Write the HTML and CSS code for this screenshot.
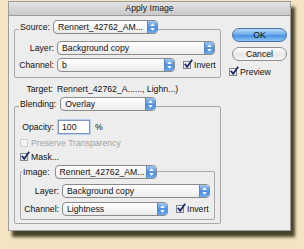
FILE: index.html
```html
<!DOCTYPE html>
<html>
<head>
<meta charset="utf-8">
<link rel="stylesheet" href="styles.css">
</head>
<body>
<div class="dialog">
  <div class="titlebar">Apply Image</div>
  <div class="content">
    <div class="main">
      <div class="group source">
        <div class="head src-head">
          <span class="hlbl">Source:</span>
          <div class="popup w-src"><span class="ptxt">Rennert_42762_AM...</span><span class="stepper"><svg width="9" height="12" viewBox="0 0 9 12"><path d="M2.2 5 L4.5 2.2 L6.8 5 Z M2.2 7 L4.5 9.8 L6.8 7 Z" fill="#fff"/></svg></span></div>
        </div>
        <div class="row r-layer">
          <span class="lbl">Layer:</span>
          <div class="popup w-layer"><span class="ptxt">Background copy</span><span class="stepper"><svg width="9" height="12" viewBox="0 0 9 12"><path d="M2.2 5 L4.5 2.2 L6.8 5 Z M2.2 7 L4.5 9.8 L6.8 7 Z" fill="#fff"/></svg></span></div>
        </div>
        <div class="row r-channel">
          <span class="lbl">Channel:</span>
          <div class="popup w-ch"><span class="ptxt">b</span><span class="stepper"><svg width="9" height="12" viewBox="0 0 9 12"><path d="M2.2 5 L4.5 2.2 L6.8 5 Z M2.2 7 L4.5 9.8 L6.8 7 Z" fill="#fff"/></svg></span></div>
          <span class="cb checked inv1"><svg width="10" height="10" viewBox="0 0 10 10"><path d="M1.8 4.8 L4.2 7.8 L9.2 0.8" fill="none" stroke="#1c2a66" stroke-width="1.8"/></svg></span>
          <span class="cbtxt">Invert</span>
        </div>
      </div>

      <div class="row target">
        <span class="lbl">Target:</span>
        <span class="tval">Rennert_42762_A......, Lighn...)</span>
      </div>

      <div class="group blending">
        <div class="head bl-head">
          <span class="hlbl">Blending:</span>
          <div class="popup w-bl"><span class="ptxt">Overlay</span><span class="stepper"><svg width="9" height="12" viewBox="0 0 9 12"><path d="M2.2 5 L4.5 2.2 L6.8 5 Z M2.2 7 L4.5 9.8 L6.8 7 Z" fill="#fff"/></svg></span></div>
        </div>
        <div class="row r-opacity">
          <span class="lbl">Opacity:</span>
          <span class="input">100</span>
          <span class="pct">%</span>
        </div>
        <div class="crow r-preserve">
          <span class="cb disabled"></span>
          <span class="cbtxt grey">Preserve Transparency</span>
        </div>
        <div class="crow r-mask">
          <span class="cb checked"><svg width="10" height="10" viewBox="0 0 10 10"><path d="M1.8 4.8 L4.2 7.8 L9.2 0.8" fill="none" stroke="#1c2a66" stroke-width="1.8"/></svg></span>
          <span class="cbtxt">Mask...</span>
        </div>

        <div class="group sub">
          <div class="head img-head">
            <span class="hlbl">Image:</span>
            <div class="popup w-img"><span class="ptxt">Rennert_42762_AM...</span><span class="stepper"><svg width="9" height="12" viewBox="0 0 9 12"><path d="M2.2 5 L4.5 2.2 L6.8 5 Z M2.2 7 L4.5 9.8 L6.8 7 Z" fill="#fff"/></svg></span></div>
          </div>
          <div class="row s-layer">
            <span class="lbl slbl">Layer:</span>
            <div class="popup w-slayer"><span class="ptxt">Background copy</span><span class="stepper"><svg width="9" height="12" viewBox="0 0 9 12"><path d="M2.2 5 L4.5 2.2 L6.8 5 Z M2.2 7 L4.5 9.8 L6.8 7 Z" fill="#fff"/></svg></span></div>
          </div>
          <div class="row s-channel">
            <span class="lbl slbl">Channel:</span>
            <div class="popup w-sch"><span class="ptxt">Lightness</span><span class="stepper"><svg width="9" height="12" viewBox="0 0 9 12"><path d="M2.2 5 L4.5 2.2 L6.8 5 Z M2.2 7 L4.5 9.8 L6.8 7 Z" fill="#fff"/></svg></span></div>
            <span class="cb checked inv2"><svg width="10" height="10" viewBox="0 0 10 10"><path d="M1.8 4.8 L4.2 7.8 L9.2 0.8" fill="none" stroke="#1c2a66" stroke-width="1.8"/></svg></span>
            <span class="cbtxt">Invert</span>
          </div>
        </div>
      </div>
    </div>

    <div class="side">
      <div class="btn ok">OK</div>
      <div class="btn cancel">Cancel</div>
      <div class="crow preview">
        <span class="cb checked"><svg width="10" height="10" viewBox="0 0 10 10"><path d="M1.8 4.8 L4.2 7.8 L9.2 0.8" fill="none" stroke="#1c2a66" stroke-width="1.8"/></svg></span>
        <span class="cbtxt">Preview</span>
      </div>
    </div>
  </div>
</div>
</body>
</html>
```

FILE: styles.css
```css
html, body {
  margin: 0;
  padding: 0;
}
body {
  width: 304px;
  height: 249px;
  background: #f3e5c1;
  font-family: "Liberation Sans", Arial, sans-serif;
  font-size: 8.7px;
  color: #111;
  overflow: hidden;
}
.dialog {
  box-sizing: border-box;
  margin: 1px 0 0 8px;
  width: 283px;
  height: 230px;
  background: #ededed;
  border: 1px solid #9c9c9c;
  box-shadow: 4px 6px 3px rgba(58, 52, 28, 0.92);
}
.titlebar {
  height: 13px;
  line-height: 13px;
  text-align: center;
  background: linear-gradient(#e2e2e2, #c9c9c9);
  border-bottom: 1px solid #9a9a9a;
  color: #1a1a1a;
}
.content {
  display: flex;
  padding-left: 5px;
}
.main {
  width: 207px;
}
.group {
  box-sizing: border-box;
  border: 1px solid #a8a8a8;
  border-radius: 2px;
}
.source {
  margin-top: 13px;
  padding-bottom: 5px;
}
.head {
  display: flex;
  align-items: center;
  width: fit-content;
  height: 14px;
  background: #ededed;
}
.hlbl {
  padding: 0 1px;
}
.src-head {
  margin: -10px 0 0 4px;
}
.src-head .popup { margin-left: 2px; }
.row {
  display: flex;
  align-items: center;
  height: 14px;
}
.lbl {
  width: 39px;
  text-align: right;
  margin-right: 3px;
  flex: none;
}
.r-layer { margin-top: 7px; }
.r-channel { margin-top: 3px; }

.popup {
  box-sizing: border-box;
  display: flex;
  align-items: center;
  height: 14px;
  border: 1px solid #8b8b8b;
  border-radius: 4px;
  background: linear-gradient(#ffffff, #ececec);
  overflow: hidden;
  flex: none;
}
.ptxt {
  flex: 1;
  padding-left: 4px;
  white-space: nowrap;
  overflow: hidden;
}
.stepper {
  display: flex;
  align-items: center;
  justify-content: center;
  flex: none;
  width: 9px;
  height: 12px;
  background: linear-gradient(#9cc6f0, #4a8ede 55%, #6ea9ea);
  border-left: 1px solid #5b87c0;
}
.w-src { width: 105px; }
.w-layer { width: 158px; }
.w-ch { width: 118px; }
.w-bl { width: 96px; }
.w-img { width: 102px; }
.w-slayer { width: 148px; }
.w-sch { width: 106px; }

.cb {
  box-sizing: border-box;
  display: inline-flex;
  align-items: center;
  justify-content: center;
  width: 8px;
  height: 8px;
  border: 1px solid #7f8592;
  background: linear-gradient(#fbfbfb, #e2e2e2);
  flex: none;
  overflow: visible;
}
.cb svg {
  flex: none;
  margin: -2px -2px 0 0;
}
.cb.disabled {
  border-color: #cfcfcf;
  background: #f4f4f4;
}
.cbtxt {
  margin-left: 3px;
  white-space: nowrap;
}
.grey { color: #a2a2a2; }
.inv1 { margin-left: 8px; }
.inv2 { margin-left: 8px; }

.target {
  margin-top: 5px;
  height: 12px;
}
.tval { margin-left: 1px; white-space: nowrap; }

.blending {
  margin-top: 11px;
  padding-bottom: 3px;
}
.bl-head {
  margin: -10px 0 0 4px;
}
.bl-head .popup { margin-left: 3px; }
.r-opacity { margin-top: 9px; }
.input {
  box-sizing: border-box;
  width: 32px;
  height: 14px;
  line-height: 12px;
  padding-left: 3px;
  border: 1px solid #7c95c2;
  box-shadow: 0 0 0 1px #b9cff0;
  background: #fff;
  margin-left: 1px;
}
.pct { margin-left: 5px; }
.crow {
  display: flex;
  align-items: center;
  height: 10px;
}
.r-preserve { margin: 4px 0 0 5px; }
.r-mask { margin: 4px 0 0 5px; }

.sub {
  margin: 9px 5px 0 5px;
  padding-bottom: 3px;
}
.img-head {
  margin: -7px 0 0 1px;
}
.img-head .popup { margin-left: 4px; }
.slbl { width: 38px; }
.s-layer { margin-top: 5px; }
.s-channel { margin-top: 4px; }

.side {
  display: flex;
  flex-direction: column;
  margin-left: 8px;
  width: 60px;
}
.btn {
  box-sizing: border-box;
  width: 55px;
  height: 14px;
  margin-left: 3px;
  border-radius: 7px;
  text-align: center;
  line-height: 12px;
}
.ok {
  margin-top: 12px;
  border: 1px solid #4671ad;
  background: linear-gradient(#b9dbf8 0%, #6eaeea 45%, #4a92e2 55%, #8cc4f4 100%);
}
.cancel {
  margin-top: 5px;
  border: 1px solid #8c8c8c;
  background: linear-gradient(#ffffff, #e6e6e6 55%, #f6f6f6);
}
.preview {
  margin-top: 6px;
}
```
